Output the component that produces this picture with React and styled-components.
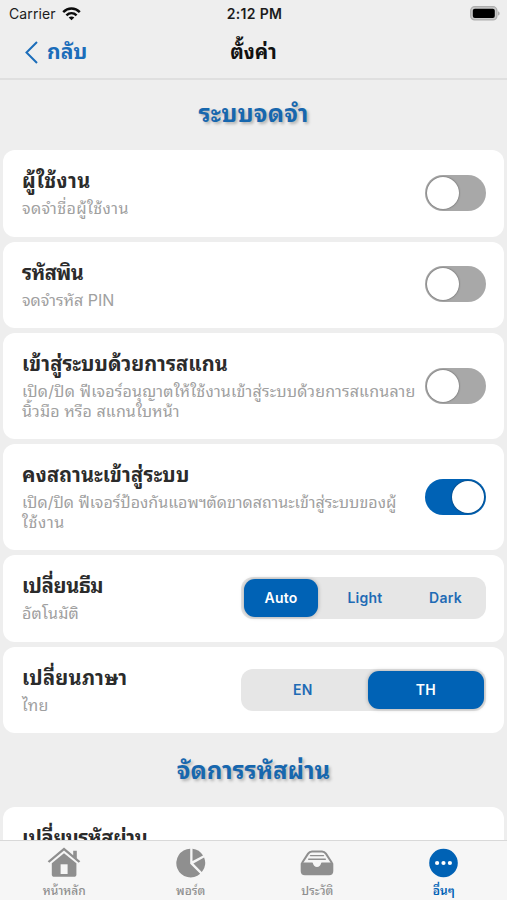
import React, { useState } from "react";
import styled, { createGlobalStyle, css } from "styled-components";

const blue = "#0062b5";
const thai = `Inter, "Noto Sans Thai Looped", "Noto Looped Thai", Thonburi, Loma, Waree, Garuda, Umpush, "Noto Sans Thai", "Noto Sans", sans-serif`;

const GlobalStyle = createGlobalStyle`
  * { box-sizing: border-box; }
  body { margin: 0; background: #eeeeee; overflow: hidden; }
  button { border: 0; padding: 0; background: none; font: inherit; color: inherit; }
`;

const Screen = styled.div`
  display: flex;
  flex-direction: column;
  width: 507px;
  height: 900px;
  overflow: hidden;
  background: #eeeeee;
  font-family: ${thai};
`;

const StatusBar = styled.div`
  display: grid;
  grid-template-columns: 1fr auto 1fr;
  align-items: center;
  height: 27px;
  flex: none;
  padding: 0 7px 0 9px;
  font-size: 14px;
  color: #1c1c1c;
`;

const Carrier = styled.div`
  display: flex;
  align-items: center;
  gap: 6px;
  letter-spacing: 0.1px;
`;

const Clock = styled.div`
  font-weight: 600;
  font-size: 14px;
  letter-spacing: 0.35px;
`;

const Battery = styled.svg`
  justify-self: end;
`;

const NavBar = styled.header`
  display: grid;
  grid-template-columns: 1fr auto 1fr;
  align-items: center;
  height: 53px;
  flex: none;
  padding: 0 24px 1px;
  border-bottom: 2px solid #dfdfdf;
`;

const BackButton = styled.button`
  display: flex;
  align-items: center;
  gap: 8px;
  color: #1b6dba;
  font-weight: 700;
`;

const Label = styled.span`
  display: block;
  white-space: nowrap;
  font-size: ${(p) => p.$size}px;
  letter-spacing: ${(p) => p.$track || 0}px;
`;

const NavLabel = styled(Label)`
  padding-bottom: 5px;
`;

const NavTitle = styled.h1`
  margin: 0;
  font-weight: 700;
  color: #111;
`;

const Content = styled.main`
  flex: 1;
  min-height: 0;
  overflow: hidden;
  padding: 0 3px;
`;

const SectionTitle = styled.h2`
  display: flex;
  justify-content: center;
  align-items: center;
  height: ${(p) => p.$height}px;
  margin: 0;
  padding-bottom: ${(p) => p.$lift || 0}px;
  color: #1767ae;
  font-weight: 700;
  text-shadow: 2px 2px 3px rgba(0, 0, 0, 0.25);
`;

const CardList = styled.div`
  display: flex;
  flex-direction: column;
  gap: 5.1px;
`;

const Card = styled.section`
  display: flex;
  justify-content: space-between;
  align-items: center;
  padding: 17px 18px 18px 19px;
  border-radius: 12px;
  background: #fff;
`;

const CardTitle = styled.h3`
  margin: 0 0 4px;
  height: 28px;
  font-weight: 700;
  color: #2b2b2b;

  & > span {
    line-height: 28px;
  }
`;

const CardText = styled.div`
  color: #a0a0a0;
  line-height: 19.5px;
`;

const SwitchTrack = styled.button`
  display: flex;
  flex: none;
  align-items: center;
  justify-content: ${(p) => (p.$on ? "flex-end" : "flex-start")};
  width: 61px;
  height: 36px;
  padding: 0 2px;
  border-radius: 18px;
  background: ${(p) => (p.$on ? blue : "#a8a8a8")};
`;

const SwitchKnob = styled.span`
  width: 32px;
  height: 32px;
  border-radius: 50%;
  background: #fff;
  box-shadow: 0 0 2px rgba(0, 0, 0, 0.55);
`;

const Segments = styled.div`
  display: flex;
  flex: none;
  width: 245px;
  height: 42px;
  padding: 2px 2px 2px 3px;
  border-radius: 12px;
  background: #e6e6e6;
`;

const Segment = styled.button`
  flex: ${(p) => p.$grow || 1};
  margin-right: ${(p) => p.$after || 0}px;
  padding-bottom: 1px;
  border-radius: 11px;
  font-size: 14px;
  font-weight: 600;
  letter-spacing: 0.25px;
  color: #1f6bb5;
  ${(p) =>
    p.$active &&
    css`
      background: ${blue};
      color: #fff;
      box-shadow: 0 0 4px rgba(0, 0, 0, 0.28);
    `}
`;

const TabBar = styled.nav`
  display: grid;
  grid-template-columns: repeat(4, 1fr);
  flex: none;
  height: 60px;
  padding-left: 1px;
  border-top: 1px solid #d9d9d9;
  background: #f6f6f6;
`;

const Tab = styled.button`
  display: flex;
  flex-direction: column;
  align-items: center;
  padding-top: 5px;
  font-weight: ${(p) => (p.$active ? 600 : 500)};
  color: ${(p) => (p.$active ? blue : "#8f8f8f")};
`;

const TabLabel = styled(Label)`
  height: 20px;
  margin-top: 3px;
  line-height: 20px;
`;

const WifiIcon = () => (
  <svg width="19" height="14" viewBox="0 0 19 14" fill="none" stroke="#0b0b0b" strokeWidth="2.5">
    <path d="M1.2 5.1C6 .3 13 .3 17.8 5.1" />
    <path d="M4.4 8.4c3-2.8 7.2-2.8 10.2 0" />
    <path d="M9.5 13.3 6.7 10.6c1.6-1.5 4-1.5 5.6 0Z" fill="#0b0b0b" stroke="none" />
  </svg>
);

const BatteryIcon = () => (
  <Battery width="31" height="15" viewBox="0 0 31 15">
    <rect x="1.7" y=".7" width="26.2" height="13.2" rx="4" fill="#c9c9c9" stroke="#adadad" strokeWidth="1.3" />
    <rect x="3.8" y="2.7" width="22" height="9.3" rx="2" fill="#000" />
    <path d="M29 5.2c2.2.8 2.2 3.6 0 4.4Z" fill="#adadad" />
  </Battery>
);

const ChevronIcon = () => (
  <svg width="15" height="23" viewBox="0 0 15 23" fill="none" stroke="#1b6dba" strokeWidth="2">
    <path d="M13 1 2.5 11.5 13 22" />
  </svg>
);

const HomeIcon = () => (
  <svg width="34" height="32" viewBox="0 0 34 32" fill="#8f8f8f">
    <path d="M.7 15.200 17 1.500l9.200 7.700V4.700h3.600v7.500l3.500 3L31.700 16.800 17 4.600 2.300 16.800Z" />
    <path d="M4.800 17.300 17 7.200l12.400 10.100v10.900a2.600 2.600 0 0 1-2.600 2.600H7.400a2.600 2.600 0 0 1-2.600-2.600Z" />
    <path d="M13.600 18.300h7v9.700h-7Z" fill="#f6f6f6" />
  </svg>
);

const PieIcon = () => (
  <svg width="32" height="32" viewBox="0 0 32 32" fill="#8f8f8f">
    <path d="M15.2 2.8v15L25.2 27.7A14.3 14.3 0 1 1 15.2 2.8Z" />
    <path d="M17.5 2.8A14.3 14.3 0 0 1 28 9.6L17.5 15Z" />
    <path d="M29.1 11.5A14.3 14.3 0 0 1 26.7 26L18.4 17.4Z" />
  </svg>
);

const TrayIcon = () => (
  <svg width="34" height="32" viewBox="0 0 34 32">
    <path d="M2 17 8.1 7.6Q9.5 5.5 12 5.5h10q2.5 0 3.9 2.1L32 17" fill="none" stroke="#8f8f8f" strokeWidth="2" />
    <path d="M.7 17.8q0-1.3 1.3-1.3H12q1 0 1.1 1.3a4 4 0 0 0 7.8 0q.2-1.3 1.1-1.3h10q1.3 0 1.3 1.3V25q0 4.2-4.2 4.2H4.9Q.7 29.2.7 25Z" fill="#8f8f8f" />
    <path d="M10.5 9.6h13M8.7 13.2h16.6" stroke="#8f8f8f" strokeWidth="1.4" strokeLinecap="round" />
  </svg>
);

const MoreIcon = () => (
  <svg width="32" height="32" viewBox="0 0 32 32">
    <circle cx="15.5" cy="17" r="14.3" fill={blue} />
    <circle cx="9.1" cy="17" r="2.1" fill="#fff" />
    <circle cx="15.5" cy="17" r="2.1" fill="#fff" />
    <circle cx="21.9" cy="17" r="2.1" fill="#fff" />
  </svg>
);

function Setting({ title, track, lines, children }) {
  return (
    <Card>
      <div>
        <CardTitle><Label $size={20} $track={track}>{title}</Label></CardTitle>
        <CardText>
          {lines.map(([text, lineTrack]) => (
            <Label key={text} $size={16} $track={lineTrack}>{text}</Label>
          ))}
        </CardText>
      </div>
      {children}
    </Card>
  );
}

function Switch({ initial = false }) {
  const [on, setOn] = useState(initial);
  return (
    <SwitchTrack role="switch" aria-checked={on} $on={on} onClick={() => setOn(!on)}>
      <SwitchKnob />
    </SwitchTrack>
  );
}

function SegmentedControl({ options, initial }) {
  const [value, setValue] = useState(initial);
  return (
    <Segments>
      {options.map(({ name, grow, after }) => (
        <Segment key={name} $grow={grow} $after={after} $active={name === value} onClick={() => setValue(name)}>
          {name}
        </Segment>
      ))}
    </Segments>
  );
}

const themes = [{ name: "Auto", grow: 74, after: 5 }, { name: "Light", grow: 84 }, { name: "Dark", grow: 77 }];
const languages = [{ name: "EN", grow: 116, after: 6 }, { name: "TH", grow: 115 }];

const tabs = [
  { label: "หน้าหลัก", Icon: HomeIcon },
  { label: "พอร์ต", Icon: PieIcon },
  { label: "ประวัติ", Icon: TrayIcon },
  { label: "อื่นๆ", Icon: MoreIcon, active: true },
];

export default function App() {
  return (
    <Screen>
      <GlobalStyle />
      <StatusBar>
        <Carrier>Carrier <WifiIcon /></Carrier>
        <Clock>2:12 PM</Clock>
        <BatteryIcon />
      </StatusBar>
      <NavBar>
        <BackButton><ChevronIcon /><NavLabel $size={21}>กลับ</NavLabel></BackButton>
        <NavTitle><NavLabel $size={20}>ตั้งค่า</NavLabel></NavTitle>
      </NavBar>
      <Content>
        <SectionTitle $height={70} $lift={8}><Label $size={24} $track={0.25}>ระบบจดจำ</Label></SectionTitle>
        <CardList>
          <Setting title="ผู้ใช้งาน" track={0.45} lines={[["จดจำชื่อผู้ใช้งาน", 0.4]]}><Switch /></Setting>
          <Setting title="รหัสพิน" track={-0.5} lines={[["จดจำรหัส PIN", 0]]}><Switch /></Setting>
          <Setting
            title="เข้าสู่ระบบด้วยการสแกน"
            track={0.1}
            lines={[
              ["เปิด/ปิด ฟีเจอร์อนุญาตให้ใช้งานเข้าสู่ระบบด้วยการสแกนลาย", 0.18],
              ["นิ้วมือ หรือ สแกนใบหน้า", 0.1],
            ]}
          ><Switch /></Setting>
          <Setting
            title="คงสถานะเข้าสู่ระบบ"
            track={0.2}
            lines={[
              ["เปิด/ปิด ฟีเจอร์ป้องกันแอพฯตัดขาดสถานะเข้าสู่ระบบของผู้", 0],
              ["ใช้งาน", 0.6],
            ]}
          ><Switch initial /></Setting>
          <Setting title="เปลี่ยนธีม" track={-0.3} lines={[["อัตโนมัติ", 0.25]]}>
            <SegmentedControl options={themes} initial="Auto" />
          </Setting>
          <Setting title="เปลี่ยนภาษา" track={0.3} lines={[["ไทย", 0.4]]}>
            <SegmentedControl options={languages} initial="TH" />
          </Setting>
        </CardList>
        <SectionTitle $height={74} $lift={5}><Label $size={24}>จัดการรหัสผ่าน</Label></SectionTitle>
        <Setting title="เปลี่ยนรหัสผ่าน" track={-0.4} lines={[]} />
      </Content>
      <TabBar>
        {tabs.map(({ label, Icon, active }) => (
          <Tab key={label} $active={active}>
            <Icon />
            <TabLabel $size={12}>{label}</TabLabel>
          </Tab>
        ))}
      </TabBar>
    </Screen>
  );
}
